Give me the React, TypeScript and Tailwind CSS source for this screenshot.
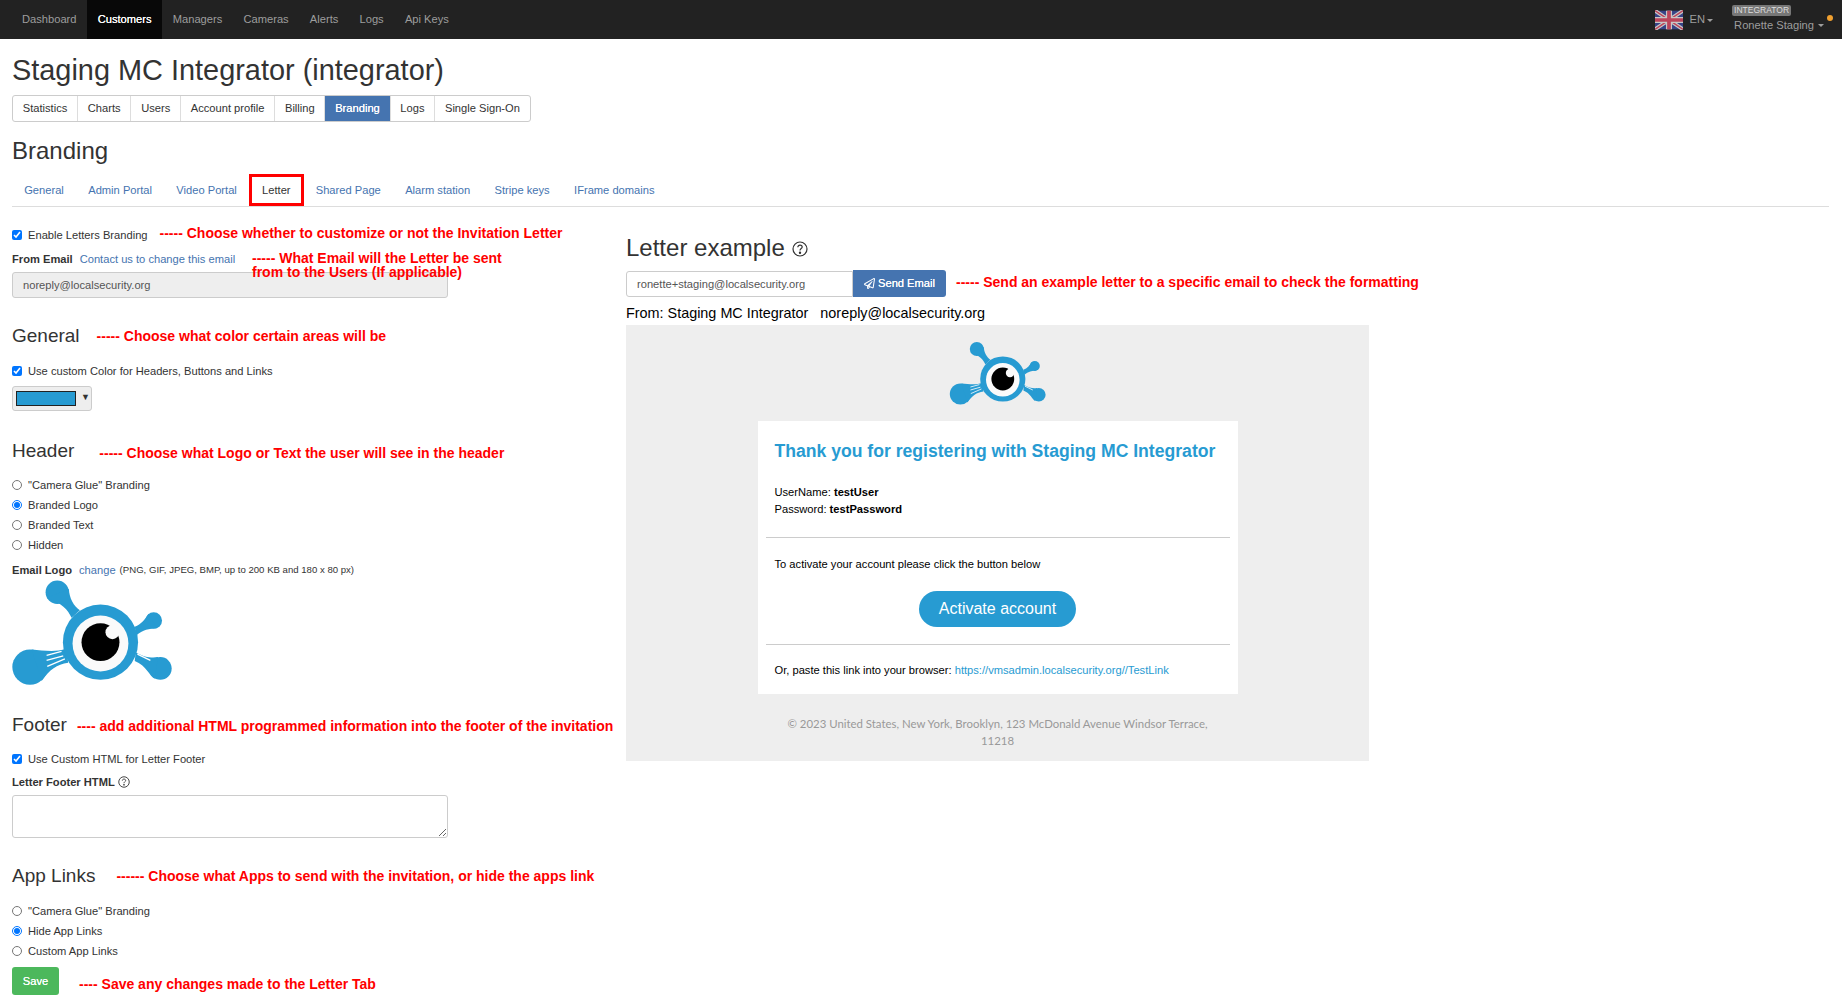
import { FaRegPaperPlane } from "react-icons/fa";

const navItems = ["Dashboard", "Customers", "Managers", "Cameras", "Alerts", "Logs", "Api Keys"];
const pageTabs = ["Statistics", "Charts", "Users", "Account profile", "Billing", "Branding", "Logs", "Single Sign-On"];
const subTabs = ["General", "Admin Portal", "Video Portal", "Letter", "Shared Page", "Alarm station", "Stripe keys", "IFrame domains"];

function Logo({ className }: { className: string }) {
  return (
    <svg viewBox="36 33 484 315" className={className}>
      <g fill="#279bd2">
        <circle cx="172" cy="68" r="35" />
        <path d="M140 85C185 100 205 120 215 145L240 122C222 110 208 85 207 58Z" />
        <circle cx="462" cy="153" r="25" />
        <path d="M405 172C425 165 435 150 447 133L470 176C450 176 428 182 410 197Z" />
        <circle cx="482" cy="297" r="34" />
        <path d="M408 248C435 264 455 266 475 263L465 328C450 322 440 288 405 275Z" />
        <circle cx="90" cy="293" r="53" />
        <path d="M95 240C130 242 160 250 200 238L205 280C170 285 150 300 125 335Z" />
        <circle cx="302" cy="218" r="113" />
      </g>
      <circle cx="302" cy="222" r="84" fill="#fafafa" />
      <circle cx="302" cy="218" r="57" fill="#000" />
      <circle cx="338" cy="188" r="21" fill="#fafafa" />
      <g stroke="#fff" strokeWidth="4">
        <path d="M140 258L185 246M140 273L190 259M142 291L195 268M413 254L452 273" />
      </g>
    </svg>
  );
}

function Flag() {
  return (
    <svg viewBox="0 0 60 40" className="h-5 w-7 opacity-75">
      <rect width="60" height="40" fill="#3f4fa8" />
      <path d="M0 0L60 40M60 0L0 40" stroke="#fff" strokeWidth="8" />
      <path d="M0 0L60 40M60 0L0 40" stroke="#f0506e" strokeWidth="3" />
      <path d="M30 0V40M0 20H60" stroke="#fff" strokeWidth="13" />
      <path d="M30 0V40M0 20H60" stroke="#f0506e" strokeWidth="8" />
    </svg>
  );
}

function Help({ className }: { className: string }) {
  return (
    <svg viewBox="0 0 16 16" fill="none" stroke="currentColor" strokeWidth="1.2" className={className}>
      <circle cx="8" cy="8" r="7" />
      <path d="M5.8 6.2C5.8 4.9 6.8 4.1 8 4.1C9.3 4.1 10.2 4.9 10.2 6C10.2 7.6 8 7.6 8 9.6" />
      <circle cx="8" cy="11.8" r="0.6" fill="currentColor" />
    </svg>
  );
}

function Note({ children, className = "" }: { children: React.ReactNode; className?: string }) {
  return <span className={`text-[14px] font-bold whitespace-nowrap text-[#ff0000] ${className}`}>{children}</span>;
}

function Check({ label }: { label: string }) {
  return (
    <label className="flex h-5 items-center">
      <input type="checkbox" defaultChecked className="m-0 mr-[6px] h-[10px] w-[10px]" />
      <span>{label}</span>
    </label>
  );
}

function Radio({ label, name, checked }: { label: string; name: string; checked?: boolean }) {
  return (
    <label className="flex h-5 items-center">
      <input type="radio" name={name} defaultChecked={checked} className="m-0 mr-[6px] h-[10px] w-[10px]" />
      <span>{label}</span>
    </label>
  );
}

function Heading({ title, note, gap }: { title: string; note: string; gap: string }) {
  return (
    <div className="flex h-7 items-center">
      <h3 className="text-[19px] leading-7 text-[#333]">{title}</h3>
      <Note className={gap}>{note}</Note>
    </div>
  );
}

export default function App() {
  return (
    <div className="min-h-[1002px] bg-white font-['Liberation_Sans',Arial,sans-serif] text-[11.15px] text-[#333]">
      <nav className="flex h-[39px] items-center justify-between bg-[#222] pl-[11.4px] text-[#9d9d9d]">
        <div className="flex h-full">
          {navItems.map((item) => (
            <a
              key={item}
              className={`flex h-full items-center px-[10.6px] ${item === "Customers" ? "bg-[#080808] text-white [text-shadow:0_0_0.6px_#fff]" : ""}`}
            >
              {item}
            </a>
          ))}
        </div>
        <div className="flex h-full items-center pr-[9px]">
          <Flag />
          <span className="ml-[7px]">EN</span>
          <span className="mt-[1px] ml-[2px] h-0 w-0 border-x-[3px] border-t-[3px] border-x-transparent border-t-[#9d9d9d]"></span>
          <div className="ml-[19px] flex flex-col items-start">
            <span className="h-[11px] rounded-[2px] bg-[#777] px-[2px] text-[8.5px] leading-[11px] text-[#ddd]">INTEGRATOR</span>
            <div className="mt-[1px] flex items-center pl-[2px]">
              Ronette Staging
              <span className="mt-[1px] ml-[4px] h-0 w-0 border-x-[3px] border-t-[3px] border-x-transparent border-t-[#9d9d9d]"></span>
            </div>
          </div>
          <span className="mb-[3px] ml-[3px] h-[6px] w-[6px] rounded-full bg-[#f0a030]"></span>
        </div>
      </nav>

      <div className="px-[12px] pr-[13px]">
        <h1 className="mt-[14px] h-[35px] text-[28.9px] leading-[35px]">Staging MC Integrator (integrator)</h1>
        <div className="mt-[7px] flex h-[27px] w-fit rounded-[3px] border border-[#ccc]">
          {pageTabs.map((tab) => (
            <a
              key={tab}
              className={`flex items-center border-r border-[#ddd] px-[9.75px] last:border-r-0 ${tab === "Branding" ? "bg-[#4574b0] text-white [text-shadow:0_0_0.6px_#fff]" : ""}`}
            >
              {tab}
            </a>
          ))}
        </div>
        <h2 className="mt-[13px] h-8 text-[24px] leading-8">Branding</h2>
        <div className="mt-[7px] flex h-[33px] border-b border-[#ddd]">
          {subTabs.map((tab) => (
            <a key={tab} className={`relative flex items-center pt-[1px] ${tab === "Letter" ? "px-[13px] text-[#333]" : "px-[12.2px] text-[#4574b0]"}`}>
              {tab}
              {tab === "Letter" && <span className="absolute inset-0 border-[3px] border-[#ff0000]"></span>}
            </a>
          ))}
        </div>

        <div className="flex">
          <div className="relative w-[614px] shrink-0 pt-[18px] pb-[7px]">
            <div className="flex h-5 items-center">
              <Check label="Enable Letters Branding" />
              <Note className="mb-[3px] ml-[12px]">----- Choose whether to customize or not the Invitation Letter</Note>
            </div>
            <div className="mt-[4px] flex h-5 items-center">
              <b>From Email</b>
              <a className="ml-[7px] text-[#4574b0]">Contact us to change this email</a>
            </div>
            <input
              readOnly
              value="noreply@localsecurity.org"
              className="mt-[3px] h-[26px] w-[436px] rounded-[3px] border border-[#ccc] bg-[#eee] px-[10px] text-[#555]"
            />
            <Note className="absolute top-[44px] left-[240px] leading-[14px]">
              ----- What Email will the Letter be sent
              <br />
              from to the Users (If applicable)
            </Note>

            <div className="mt-[24px]">
              <Heading title="General" note="----- Choose what color certain areas will be" gap="ml-[17px]" />
            </div>
            <div className="mt-[11px]">
              <Check label="Use custom Color for Headers, Buttons and Links" />
            </div>
            <div className="mt-[5px] flex h-[25px] w-[80px] items-center rounded-[3px] border border-[#ccc] bg-[#eee] pl-[3px]">
              <span className="h-[15px] w-[60px] border border-[#222] bg-[#279bd2]"></span>
              <span className="mb-[2px] ml-[5px] text-[9px] text-[#333]">▼</span>
            </div>

            <div className="mt-[26px]">
              <Heading title="Header" note="----- Choose what Logo or Text the user will see in the header" gap="mt-[5px] ml-[25px]" />
            </div>
            <div className="mt-[10px]">
              <Radio name="header" label={'"Camera Glue" Branding'} />
              <Radio name="header" label="Branded Logo" checked />
              <Radio name="header" label="Branded Text" />
              <Radio name="header" label="Hidden" />
            </div>
            <div className="mt-[5px] flex h-5 items-center">
              <b>Email Logo</b>
              <a className="ml-[7px] text-[#4574b0]">change</a>
              <span className="ml-[4px] text-[9.6px]">(PNG, GIF, JPEG, BMP, up to 200 KB and 180 x 80 px)</span>
            </div>
            <Logo className="h-[106px] w-[161px]" />

            <div className="mt-[25px]">
              <Heading title="Footer" note="---- add additional HTML programmed information into the footer of the invitation" gap="mt-[2px] ml-[10px]" />
            </div>
            <div className="mt-[10px]">
              <Check label="Use Custom HTML for Letter Footer" />
            </div>
            <div className="mt-[3px] flex h-5 items-center font-bold">
              Letter Footer HTML
              <Help className="ml-[3px] h-3 w-3 font-normal" />
            </div>
            <textarea className="mt-[3px] block h-[43px] w-[436px] rounded-[3px] border border-[#ccc]"></textarea>

            <div className="mt-[24px]">
              <Heading title="App Links" note="------ Choose what Apps to send with the invitation, or hide the apps link" gap="ml-[21px]" />
            </div>
            <div className="mt-[11px]">
              <Radio name="apps" label={'"Camera Glue" Branding'} />
              <Radio name="apps" label="Hide App Links" checked />
              <Radio name="apps" label="Custom App Links" />
            </div>
            <div className="mt-[6px] flex items-center">
              <button className="h-[28px] w-[47px] rounded-[3px] bg-[#4cb85c] text-white [text-shadow:0_0_0.6px_#fff]">Save</button>
              <Note className="mt-[7px] ml-[20px]">---- Save any changes made to the Letter Tab</Note>
            </div>
          </div>

          <div className="pt-[25px]">
            <h2 className="flex h-8 items-center text-[24px]">
              Letter example
              <Help className="mt-[2px] ml-[7px] h-4 w-4" />
            </h2>
            <div className="mt-[6px] flex h-[27px] items-center">
              <input
                readOnly
                value="ronette+staging@localsecurity.org"
                className="h-[26px] w-[227px] rounded-l-[3px] border border-[#ccc] px-[10px] text-[#555]"
              />
              <button className="flex h-[27px] w-[93px] items-center justify-center rounded-r-[3px] bg-[#4574b0] text-white [text-shadow:0_0_0.6px_#fff]">
                <FaRegPaperPlane className="mr-[3px] h-[11px] w-[11px]" />
                Send Email
              </button>
              <Note className="mb-[3px] ml-[10px]">----- Send an example letter to a specific email to check the formatting</Note>
            </div>
            <div className="mt-[7px] flex h-5 items-center text-[14.4px] whitespace-pre text-black">From: Staging MC Integrator   noreply@localsecurity.org</div>
            <div className="mt-[1px] flex h-[436px] w-[743px] flex-col items-center bg-[#eee] pt-[17px]">
              <Logo className="h-[63px] w-[98px]" />
              <div className="mt-[16px] h-[273px] w-[480px] bg-white px-[8px] pt-[18px] text-black">
                <h3 className="h-6 px-[9px] text-[17.6px] leading-6 font-bold whitespace-nowrap text-[#279bd2]">Thank you for registering with Staging MC Integrator</h3>
                <div className="mt-[21px] px-[9px] leading-[17px]">
                  <div>
                    UserName: <b>testUser</b>
                  </div>
                  <div>
                    Password: <b>testPassword</b>
                  </div>
                </div>
                <div className="mt-[19px] border-t border-[#ccc]"></div>
                <p className="mt-[18px] h-[17px] px-[9px] leading-[17px]">To activate your account please click the button below</p>
                <div className="mt-[18px] flex justify-center">
                  <span className="flex h-[36px] w-[157px] items-center justify-center rounded-[18px] bg-[#279bd2] text-[16px] text-white">Activate account</span>
                </div>
                <div className="mt-[17px] border-t border-[#ccc]"></div>
                <p className="mt-[17px] h-[17px] px-[9px] leading-[17px]">
                  Or, paste this link into your browser: <a className="text-[#279bd2]">https://vmsadmin.localsecurity.org//TestLink</a>
                </p>
              </div>
              <p className="mt-[21px] w-[440px] text-center font-['Lato',sans-serif] text-[11.4px] leading-[17px] text-[#999]">
                © 2023 United States, New York, Brooklyn, 123 McDonald Avenue Windsor Terrace, 11218
              </p>
            </div>
          </div>
        </div>
      </div>
    </div>
  );
}
